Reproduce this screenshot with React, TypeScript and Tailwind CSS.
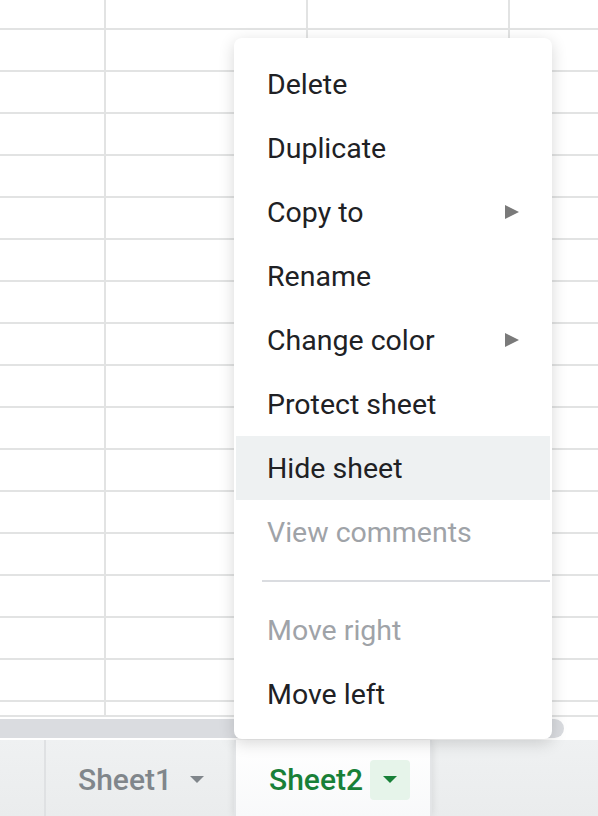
import React from "react";

const rowHeights = [28, ...Array(16).fill(40), 13];

type Item = { label: string; disabled?: boolean; active?: boolean; submenu?: boolean; divider?: boolean };

const items: Item[] = [
  { label: "Delete" },
  { label: "Duplicate" },
  { label: "Copy to", submenu: true },
  { label: "Rename" },
  { label: "Change color", submenu: true },
  { label: "Protect sheet" },
  { label: "Hide sheet", active: true },
  { label: "View comments", disabled: true },
  { label: "", divider: true },
  { label: "Move right", disabled: true },
  { label: "Move left" },
];

function Caret({ color }: { color: string }) {
  return (
    <svg width="14" height="8" viewBox="0 0 14 8">
      <polygon points="0,0 14,0 7,7" fill={color} />
    </svg>
  );
}

function SheetTab({ name, active }: { name: string; active?: boolean }) {
  return (
    <div
      className={
        active
          ? "flex h-full w-[198px] shrink-0 items-center pl-[33px] pt-[4px] bg-gradient-to-b from-white to-[#f8f9fa] border-x-2 border-[#e3e5e7] shadow-[0_0_8px_rgba(0,0,0,0.10)]"
          : "flex h-full w-[188px] shrink-0 items-center pl-[32px] pt-[4px]"
      }
    >
      <span
        className={`text-[30px] font-medium leading-none whitespace-nowrap ${active ? "text-[#188038]" : "text-[#80868b]"}`}
      >
        {name}
      </span>
      <div
        className={`${active ? "ml-[7px] bg-[#e6f4ea]" : "ml-[5px]"} flex h-[40px] w-[40px] shrink-0 items-center justify-center rounded-[4px]`}
      >
        <Caret color={active ? "#188038" : "#80868b"} />
      </div>
    </div>
  );
}

export default function App() {
  return (
    <div
      className="relative h-[816px] w-[598px] overflow-hidden bg-white"
      style={{ fontFamily: "Roboto, 'Liberation Sans', sans-serif" }}
    >
      {/* grid */}
      <div className="flex flex-col">
        {rowHeights.map((h, i) => (
          <div key={i} className="flex border-b-2 border-[#e2e3e3]" style={{ height: h + 2 }}>
            <div className="w-[106px] shrink-0 border-r-2 border-[#e2e3e3]" />
            <div className="w-[202px] shrink-0 border-r-2 border-[#e2e3e3]" />
            <div className="w-[202px] shrink-0 border-r-2 border-[#e2e3e3]" />
            <div className="flex-1" />
          </div>
        ))}
      </div>

      {/* horizontal scrollbar */}
      <div className="mt-[2px] h-[19px] w-[564px] rounded-r-full bg-[#dadce0]" />

      {/* sheet tabs */}
      <div className="mt-[2px] flex h-[76px] bg-gradient-to-b from-[#eff1f2] to-[#eaeced]">
        <div className="h-full w-[46px] shrink-0 border-r-2 border-[#dfe1e3]" />
        <SheetTab name="Sheet1" />
        <SheetTab name="Sheet2" active />
        <div className="flex-1" />
      </div>

      {/* context menu */}
      <div className="absolute left-[234px] top-[38px] w-[318px] rounded-[8px] bg-white px-[2px] pt-[14px] pb-[13px] shadow-[0_4px_16px_rgba(0,0,0,0.16)]">
        {items.map((it, i) =>
          it.divider ? (
            <div key={i} className="my-[16px] ml-[26px] h-[2px] bg-[#dadce0]" />
          ) : (
            <div
              key={i}
              className={`flex h-[64px] items-center justify-between pl-[31px] pr-[31px] pt-[2px] text-[28.5px] ${
                it.active ? "bg-[#eef1f2]" : ""
              } ${it.disabled ? "text-[#9fa3a8]" : "text-[#202124]"}`}
            >
              <span>{it.label}</span>
              {it.submenu && (
                <svg width="14" height="14" viewBox="0 0 14 14" className="-mt-[2px]">
                  <polygon points="0,0 14,7 0,14" fill="#7a7a7a" />
                </svg>
              )}
            </div>
          )
        )}
      </div>
    </div>
  );
}
